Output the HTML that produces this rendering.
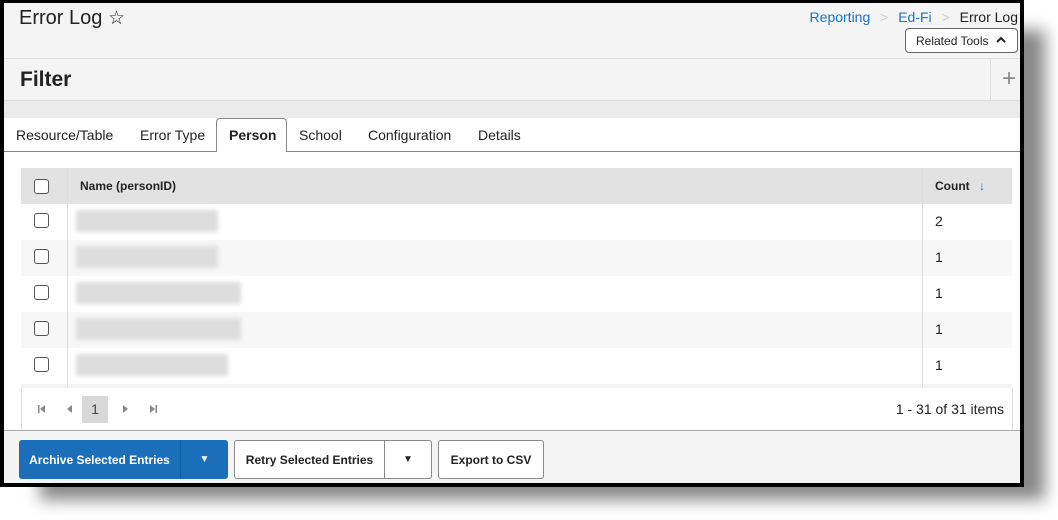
<!DOCTYPE html>
<html><head><style>
*{box-sizing:border-box;margin:0;padding:0}
body{width:1058px;height:520px;background:#fff;font-family:"Liberation Sans",sans-serif;position:relative;overflow:hidden;color:#222}
.shadow{position:absolute;left:40px;top:30px;width:1005px;height:470px;background:#888;filter:blur(8px)}
.frame{position:absolute;left:0;top:0;width:1024px;height:487px;border:4px solid #000;border-top-width:3px;background:#f4f4f4;overflow:hidden}
.abs{position:absolute}
.cb{position:absolute;width:15px;height:15px;border:1.5px solid #555;border-radius:3px;background:#fff}
.btn{position:absolute;top:437px;height:39px;border-radius:3px;font-size:12px;font-weight:bold;display:flex;align-items:center}
</style></head><body>
<div class="shadow"></div>
<div class="frame">
 <div class="abs" style="left:15px;top:4px;font-size:20px;color:#222">Error Log <span style="font-size:19px">☆</span></div>
 <div class="abs" style="right:2px;top:6px;font-size:14px;color:#222"><span style="color:#1d72c2">Reporting</span> <span style="color:#ccc;margin:0 6px">&gt;</span> <span style="color:#1d72c2">Ed-Fi</span> <span style="color:#ccc;margin:0 6px">&gt;</span> Error Log</div>
 <div class="abs" style="left:901px;top:25px;width:113px;height:25px;border:1px solid #666;border-radius:4px;background:#fff;font-size:12px;padding:5px 0 0 10px">Related Tools <svg width="12" height="10" viewBox="0 0 12 10" style="margin-left:3px"><path d="M2 7 L6 3 L10 7" stroke="#222" stroke-width="2" fill="none"/></svg></div>
 <div class="abs" style="left:0;top:55px;width:1016px;height:43px;border-top:1px solid #ddd;border-bottom:1px solid #ddd;background:#f4f4f4"></div>
 <div class="abs" style="left:16px;top:65px;font-size:21px;font-weight:bold">Filter</div>
 <div class="abs" style="left:986px;top:56px;width:1px;height:41px;background:#ddd"></div>
 <div class="abs" style="left:998px;top:62px;font-size:24px;color:#888">+</div>
 <div class="abs" style="left:0;top:98px;width:1016px;height:17px;background:#ebebeb"></div>
 <div class="abs" style="left:0;top:115px;width:1016px;height:312px;background:#fff"></div>
 <div class="abs" style="left:0;top:148px;width:1016px;height:1px;background:#888"></div>
 <div class="abs" style="left:212px;top:115px;width:71px;height:34px;border:1px solid #888;border-bottom:none;border-radius:4px 4px 0 0;background:#fff"></div>
 <div class="abs" style="top:124px;font-size:14px;left:12px">Resource/Table</div>
 <div class="abs" style="top:124px;font-size:14px;left:136px">Error Type</div>
 <div class="abs" style="top:124px;font-size:14px;left:225px;font-weight:bold">Person</div>
 <div class="abs" style="top:124px;font-size:14px;left:295px">School</div>
 <div class="abs" style="top:124px;font-size:14px;left:364px">Configuration</div>
 <div class="abs" style="top:124px;font-size:14px;left:474px">Details</div>
 <div class="abs" style="left:17px;top:165px;width:991px;height:36px;background:#e2e2e2"></div>
 <div class="abs" style="left:17px;top:237px;width:991px;height:36px;background:#f7f7f7"></div>
 <div class="abs" style="left:17px;top:309px;width:991px;height:36px;background:#f7f7f7"></div>
 <div class="abs" style="left:17px;top:381px;width:991px;height:4px;background:#f2f2f2"></div>
 <div class="abs" style="left:63px;top:165px;width:1px;height:220px;background:#ddd"></div>
 <div class="abs" style="left:918px;top:165px;width:1px;height:220px;background:#ddd"></div>
 <div class="abs" style="left:17px;top:385px;width:1px;height:42px;background:#ddd"></div>
 <div class="abs" style="left:1008px;top:385px;width:1px;height:42px;background:#ddd"></div>
 <div class="abs" style="left:76px;top:176px;font-size:12px;font-weight:bold">Name (personID)</div>
 <div class="abs" style="left:931px;top:176px;font-size:12px;font-weight:bold">Count <span style="color:#1d72c2;margin-left:6px">↓</span></div>
 <div class="cb" style="left:30px;top:176px"></div>
 <div class="cb" style="left:30px;top:210px"></div>
 <div class="cb" style="left:30px;top:246px"></div>
 <div class="cb" style="left:30px;top:282px"></div>
 <div class="cb" style="left:30px;top:318px"></div>
 <div class="cb" style="left:30px;top:354px"></div>
 <div class="abs" style="left:72px;top:207px;width:142px;height:22px;background:#ddd;filter:blur(2px)"></div>
 <div class="abs" style="left:72px;top:243px;width:142px;height:22px;background:#ddd;filter:blur(2px)"></div>
 <div class="abs" style="left:72px;top:279px;width:165px;height:22px;background:#ddd;filter:blur(2px)"></div>
 <div class="abs" style="left:72px;top:315px;width:165px;height:22px;background:#ddd;filter:blur(2px)"></div>
 <div class="abs" style="left:72px;top:351px;width:152px;height:22px;background:#ddd;filter:blur(2px)"></div>
 <div class="abs" style="left:931px;top:210px;font-size:14px">2</div>
 <div class="abs" style="left:931px;top:246px;font-size:14px">1</div>
 <div class="abs" style="left:931px;top:282px;font-size:14px">1</div>
 <div class="abs" style="left:931px;top:318px;font-size:14px">1</div>
 <div class="abs" style="left:931px;top:354px;font-size:14px">1</div>
 <svg class="abs" style="left:33px;top:401px" width="130" height="10" viewBox="0 0 130 10">
  <rect x="1" y="1" width="1.5" height="8" fill="#888"/><path d="M8 1 L3 5 L8 9Z" fill="#888"/>
  <path d="M35 1 L30 5 L35 9Z" fill="#888"/>
  <path d="M86 1 L91 5 L86 9Z" fill="#888"/>
  <path d="M113 1 L118 5 L113 9Z" fill="#888"/><rect x="118.5" y="1" width="1.5" height="8" fill="#888"/>
 </svg>
 <div class="abs" style="left:78px;top:393px;width:26px;height:27px;background:#d8d8d8;font-size:14px;text-align:center;padding-top:5px;color:#444">1</div>
 <div class="abs" style="right:16px;top:398px;font-size:14px">1 - 31 of 31 items</div>
 <div class="abs" style="left:0;top:427px;width:1016px;height:1px;background:#aaa"></div>
 <div class="btn" style="left:15px;width:209px;background:#1b6fba;color:#fff">
  <span style="width:161px;text-align:center">Archive Selected Entries</span><span style="width:1px;height:39px;background:#135a99"></span><span style="flex:1;text-align:center;font-size:10px">▼</span></div>
 <div class="btn" style="left:230px;width:198px;background:#fff;border:1px solid #888">
  <span style="width:149px;text-align:center">Retry Selected Entries</span><span style="width:1px;height:37px;background:#888"></span><span style="flex:1;text-align:center;font-size:10px">▼</span></div>
 <div class="btn" style="left:434px;width:106px;background:#fff;border:1px solid #888;justify-content:center">Export to CSV</div>
</div>
</body></html>
